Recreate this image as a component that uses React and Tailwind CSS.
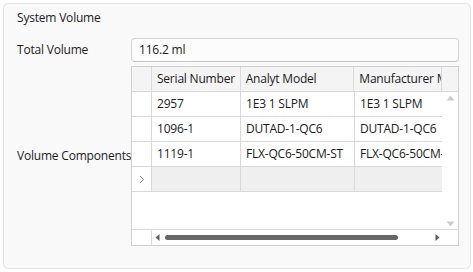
import React from "react";

const font = { fontFamily: '"Segoe UI", "Open Sans", "Noto Sans", sans-serif' };

function HeaderCell({ w, children }) {
  return (
    <div
      className={`h-[24px] flex items-center pl-[5px] overflow-hidden whitespace-nowrap border-r border-[#d9d9d9] ${w}`}
    >
      {children}
    </div>
  );
}

const rows = [
  ["2957", "1E3 1 SLPM", "1E3 1 SLPM"],
  ["1096-1", "DUTAD-1-QC6", "DUTAD-1-QC6"],
  ["1119-1", "FLX-QC6-50CM-ST", "FLX-QC6-50CM-ST"],
];

export default function App() {
  return (
    <div className="w-[473px] h-[272px] bg-white pt-[3px] pl-[3px]" style={font}>
      <div className="w-[468px] h-[266px] border border-[#e3e3e3] rounded-[5px] bg-[#f9f9f9] pl-[13px] pt-[6px] text-[12px] leading-[16px] tracking-[-0.2px] text-[#1b1b1b]">
        <div>System Volume</div>
        <div className="mt-[12px] grid grid-cols-[114px_328px] gap-y-[4px]">
          <div className="flex items-center whitespace-nowrap">Total Volume</div>
          <div className="h-[24px] rounded-[4px] border border-[#d4d4d4] border-b-[#c4c4c4] bg-[#fcfcfc] flex items-center pl-[7px]">
            116.2 ml
          </div>
          <div className="flex items-center whitespace-nowrap">Volume Components</div>
          <div className="h-[180px] border border-[#d0d0d0] bg-white flex flex-col">
            <div className="flex border-b border-[#d9d9d9] bg-[#f4f4f4]">
              <HeaderCell w="w-[20px]"></HeaderCell>
              <HeaderCell w="w-[89px]">Serial Number</HeaderCell>
              <HeaderCell w="w-[114px]">Analyt Model</HeaderCell>
              <HeaderCell w="w-[88px]">Manufacturer Model</HeaderCell>
              <div className="w-[16px] h-[24px]"></div>
            </div>
            <div className="flex h-[137px]">
              <div className="w-[310px] flex flex-col">
                {rows.map((r, i) => (
                  <div key={i} className="flex h-[25px] border-b border-[#d9d9d9]">
                    <div className="w-[20px] border-r border-[#d9d9d9]"></div>
                    <div className="w-[89px] border-r border-[#d9d9d9] pl-[5px] flex items-center whitespace-nowrap overflow-hidden">{r[0]}</div>
                    <div className="w-[114px] border-r border-[#d9d9d9] pl-[5px] flex items-center whitespace-nowrap overflow-hidden">{r[1]}</div>
                    <div className="w-[87px] pl-[5px] flex items-center whitespace-nowrap overflow-hidden">{r[2]}</div>
                  </div>
                ))}
                <div className="flex h-[25px] border-b border-[#d9d9d9]">
                  <div className="w-[20px] border-r border-[#d9d9d9] flex items-center justify-center bg-white">
                    <svg width="6" height="9" viewBox="0 0 6 9">
                      <polyline points="1,1 4.5,4.5 1,8" fill="none" stroke="#7a7a7a" strokeWidth="1" />
                    </svg>
                  </div>
                  <div className="w-[89px] border-r border-[#d9d9d9] bg-[#efefef]"></div>
                  <div className="w-[114px] border-r border-[#d9d9d9] bg-[#efefef]"></div>
                  <div className="w-[87px] bg-[#efefef]"></div>
                </div>
              </div>
              <div className="w-[16px] flex flex-col items-center justify-between pt-[3px] pb-[2px] bg-white">
                <svg width="9" height="6" viewBox="0 0 9 6">
                  <polygon points="4.5,0.5 8.5,5.5 0.5,5.5" fill="#cdcdcd" />
                </svg>
                <svg width="9" height="6" viewBox="0 0 9 6">
                  <polygon points="0.5,0.5 8.5,0.5 4.5,5.5" fill="#cdcdcd" />
                </svg>
              </div>
            </div>
            <div className="flex h-[16px] border-t border-[#d9d9d9]">
              <div className="w-[20px] border-r border-[#d9d9d9]"></div>
              <div className="w-[290px] flex items-center pl-[3px] pr-[2px]">
                <svg width="5" height="7" viewBox="0 0 5 7">
                  <polygon points="4.5,0 4.5,7 0.5,3.5" fill="#606060" />
                </svg>
                <div className="ml-[5px] w-[233px] h-[5px] rounded-full bg-[#666666]"></div>
                <div className="flex-1"></div>
                <svg width="5" height="7" viewBox="0 0 5 7">
                  <polygon points="0.5,0 0.5,7 4.5,3.5" fill="#606060" />
                </svg>
              </div>
            </div>
          </div>
        </div>
      </div>
    </div>
  );
}
